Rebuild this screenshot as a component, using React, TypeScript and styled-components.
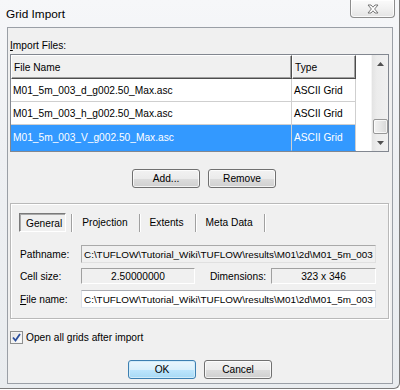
import React from "react";
import styled, { createGlobalStyle, css } from "styled-components";

const GlobalStyle = createGlobalStyle`
  html, body { margin: 0; padding: 0; }
  body {
    width: 400px; height: 390px; overflow: hidden; background: #ffffff;
    font-family: "Liberation Sans", Arial, sans-serif; font-size: 10.2px; color: #000;
  }
  * { box-sizing: border-box; }
`;

const Window = styled.div`
  width: 400px;
  height: 389px;
  display: flex;
  flex-direction: column;
  background: linear-gradient(180deg, #f6f7f9 0%, #eef0f3 40%, #e9ecef 100%);
  border-right: 1px solid #7b7b7b;
  border-bottom: 1px solid #7b7b7b;
  border-bottom-right-radius: 6px;
`;

const TitleBar = styled.div`
  height: 27px;
  display: flex;
  align-items: flex-start;
  padding-left: 6px;
`;

const Title = styled.div`
  margin-top: 7px;
  font-size: 11.8px;
  line-height: 14px;
  color: #000;
`;

const CloseButton = styled.div`
  margin-left: auto;
  margin-right: 4px;
  width: 45px;
  height: 18px;
  border: 1px solid #8d8d8d;
  border-top: none;
  border-radius: 0 0 4px 4px;
  background: linear-gradient(180deg, #fbfbfb 0%, #f1f1f1 50%, #e4e4e4 100%);
  box-shadow: inset 0 0 0 1px rgba(255, 255, 255, 0.8);
  display: flex;
  align-items: center;
  justify-content: center;
`;

const Client = styled.div`
  margin-left: 7px;
  width: 386px;
  height: 357px;
  border: 1px solid #9a9fa6;
  background: #f0f0f0;
  padding: 10px 3px 0 2px;
  display: flex;
  flex-direction: column;
`;

const U = styled.span`
  text-decoration: underline;
`;

const SectionLabel = styled.div`
  height: 15px;
  line-height: 15px;
`;

const ListBox = styled.div`
  margin-top: 1px;
  height: 98px;
  border: 1px solid #828790;
  background: #ffffff;
  display: flex;
`;

const ListBody = styled.div`
  flex: 1;
  display: flex;
  flex-direction: column;
  overflow: hidden;
`;

const HeaderRow = styled.div`
  display: flex;
  height: 24px;
  flex-shrink: 0;
`;

const HeaderCell = styled.div<{ $w: number }>`
  width: ${(p) => p.$w}px;
  height: 24px;
  background: #f0f0f0;
  border-top: 1px solid #ffffff;
  border-left: 1px solid #ffffff;
  border-right: 1px solid #4d4d4d;
  border-bottom: 1px solid #4d4d4d;
  box-shadow: inset -1px -1px 0 #a0a0a0;
  padding-left: 2px;
  display: flex;
  align-items: center;
`;

const Row = styled.div<{ $selected?: boolean }>`
  display: flex;
  height: 23px;
  flex-shrink: 0;
  ${(p) =>
    p.$selected &&
    css`
      color: #ffffff;
    `}
`;

const Cell = styled.div<{ $w: number; $selected?: boolean }>`
  width: ${(p) => p.$w}px;
  height: 100%;
  border-right: 1px solid #cfcfcf;
  border-bottom: 1px solid #cfcfcf;
  padding-left: 2px;
  display: flex;
  align-items: center;
  white-space: nowrap;
  overflow: hidden;
  background: ${(p) => (p.$selected ? "#3399ff" : "#ffffff")};
  ${(p) =>
    p.$selected &&
    css`
      border-bottom-color: #3399ff;
      height: 26px;
    `}
`;

const ScrollBar = styled.div`
  width: 17px;
  display: flex;
  flex-direction: column;
  background: linear-gradient(90deg, #e3e3e3 0%, #ececec 30%, #f0f0f0 100%);
  border-left: 1px solid #f5f5f5;
`;

const ScrollArrow = styled.div`
  height: 17px;
  display: flex;
  align-items: center;
  justify-content: center;
`;

const ScrollTrack = styled.div`
  flex: 1;
  display: flex;
  flex-direction: column;
  justify-content: flex-end;
  align-items: center;
`;

const Thumb = styled.div`
  width: 15px;
  height: 15px;
  border: 1px solid #979797;
  border-radius: 2px;
  background: linear-gradient(90deg, #f2f2f2 0%, #e6e6e6 50%, #d8d8d8 100%);
  box-shadow: inset 0 0 0 1px rgba(255, 255, 255, 0.7);
`;

const ButtonRow = styled.div<{ $top: number; $left: number }>`
  display: flex;
  gap: 8px;
  margin-top: ${(p) => p.$top}px;
  padding-left: ${(p) => p.$left}px;
`;

const Button = styled.div<{ $default?: boolean }>`
  width: 68px;
  height: 19px;
  border: 1px solid #707070;
  border-radius: 3px;
  display: flex;
  align-items: center;
  justify-content: center;
  background: linear-gradient(180deg, #f2f2f2 0%, #ebebeb 50%, #dddddd 51%, #cfcfcf 100%);
  box-shadow: inset 0 0 0 1px rgba(255, 255, 255, 0.75);
  ${(p) =>
    p.$default &&
    css`
      border-color: #3c7fb1;
      background: linear-gradient(180deg, #eaf6fd 0%, #d9f0fc 50%, #bee6fd 51%, #a7d9f5 100%);
      box-shadow: inset 0 0 0 1px #d2ecfa;
    `}
`;

const GroupBox = styled.div`
  margin-top: 15px;
  width: 379px;
  height: 116px;
  border: 1px solid #b9b9b9;
  box-shadow: inset 1px 1px 0 #ffffff, 1px 1px 0 #ffffff;
  padding: 9px 12px 0 8px;
  display: flex;
  flex-direction: column;
`;

const TabStrip = styled.div`
  display: flex;
  align-items: center;
  height: 19px;
`;

const Tab = styled.div<{ $active?: boolean }>`
  height: 19px;
  padding: 0 6px;
  display: flex;
  align-items: center;
  white-space: nowrap;
  ${(p) =>
    p.$active &&
    css`
      border-top: 1px solid #7a7a7a;
      border-left: 1px solid #7a7a7a;
      border-right: 1px solid #ffffff;
      border-bottom: 1px solid #ffffff;
      box-shadow: inset 1px 1px 0 #a9a9a9;
      padding: 2px 3px 0 6px;
    `}
`;

const TabSep = styled.div`
  width: 2px;
  height: 18px;
  margin: 0 3px 0 5px;
  border-left: 1px solid #a0a0a0;
  border-right: 1px solid #ffffff;
`;

const FieldRow = styled.div<{ $top: number; $h: number }>`
  display: flex;
  align-items: center;
  margin-top: ${(p) => p.$top}px;
  height: ${(p) => p.$h}px;
  padding-left: 1px;
`;

const FieldLabel = styled.div<{ $w: number }>`
  width: ${(p) => p.$w}px;
  flex-shrink: 0;
  white-space: nowrap;
`;

const TextField = styled.div<{ $readonly?: boolean; $w?: number }>`
  ${(p) => (p.$w ? `width: ${p.$w}px;` : "flex: 1;")}
  height: 100%;
  padding-left: 2px;
  font-size: 9.9px;
  display: flex;
  align-items: center;
  white-space: nowrap;
  overflow: hidden;
  background: ${(p) => (p.$readonly ? "#f0f0f0" : "#ffffff")};
  border: 1px solid #abadb3;
  border-left-color: #dbdfe6;
  border-right-color: #dbdfe6;
  border-bottom-color: #e3e9ef;
  ${(p) =>
    p.$readonly &&
    css`
      border-color: #a9a9a9 #e0e0e0 #e0e0e0 #a9a9a9;
    `}
`;

const StaticField = styled.div<{ $w: number }>`
  width: ${(p) => p.$w}px;
  height: 100%;
  display: flex;
  align-items: center;
  justify-content: center;
  border-top: 1px solid #a0a0a0;
  border-left: 1px solid #a0a0a0;
  border-right: 1px solid #ffffff;
  border-bottom: 1px solid #ffffff;
`;

const Spacer = styled.div<{ $w: number }>`
  width: ${(p) => p.$w}px;
  flex-shrink: 0;
`;

const CheckRow = styled.div`
  margin-top: 12px;
  display: flex;
  align-items: center;
  gap: 3px;
  height: 13px;
`;

const CheckBox = styled.div`
  width: 13px;
  height: 13px;
  border: 1px solid #8e8f8f;
  background: linear-gradient(135deg, #dcdcdc 0%, #f4f4f4 60%, #ffffff 100%);
  box-shadow: inset 0 0 0 1px #f4f4f4;
  display: flex;
  align-items: center;
  justify-content: center;
`;

const CloseIcon = () => (
  <svg width="12" height="10" viewBox="0 0 12 10">
    <path
      d="M1 1 H4 L6 3.2 L8 1 H11 L7.6 5 L11 9 H8 L6 6.8 L4 9 H1 L4.4 5 Z"
      fill="#ffffff"
      stroke="#6a6a6a"
      strokeWidth="0.9"
      strokeLinejoin="round"
    />
  </svg>
);

const UpArrow = () => (
  <svg width="7" height="4" viewBox="0 0 7 4">
    <path d="M0 4 L3.5 0 L7 4 Z" fill="#505050" />
  </svg>
);

const DownArrow = () => (
  <svg width="7" height="4" viewBox="0 0 7 4">
    <path d="M0 0 L3.5 4 L7 0 Z" fill="#505050" />
  </svg>
);

const CheckMark = () => (
  <svg width="9" height="9" viewBox="0 0 9 9">
    <path d="M1 4.5 L3.5 7.5 L8 1" fill="none" stroke="#2a4e9c" strokeWidth="1.8" />
  </svg>
);

const files = [
  "M01_5m_003_d_g002.50_Max.asc",
  "M01_5m_003_h_g002.50_Max.asc",
  "M01_5m_003_V_g002.50_Max.asc",
];

const path = "C:\\TUFLOW\\Tutorial_Wiki\\TUFLOW\\results\\M01\\2d\\M01_5m_003";

export default function App() {
  return (
    <>
      <GlobalStyle />
      <Window>
        <TitleBar>
          <Title>Grid Import</Title>
          <CloseButton>
            <CloseIcon />
          </CloseButton>
        </TitleBar>
        <Client>
          <SectionLabel>
            <U>I</U>mport Files:
          </SectionLabel>
          <ListBox>
            <ListBody>
              <HeaderRow>
                <HeaderCell $w={281}>File Name</HeaderCell>
                <HeaderCell $w={64}>Type</HeaderCell>
              </HeaderRow>
              {files.map((f, i) => {
                const sel = i === files.length - 1;
                return (
                  <Row key={f} $selected={sel}>
                    <Cell $w={281} $selected={sel}>
                      {f}
                    </Cell>
                    <Cell $w={64} $selected={sel}>
                      ASCII Grid
                    </Cell>
                  </Row>
                );
              })}
            </ListBody>
            <ScrollBar>
              <ScrollArrow>
                <UpArrow />
              </ScrollArrow>
              <ScrollTrack>
                <Thumb />
              </ScrollTrack>
              <ScrollArrow>
                <DownArrow />
              </ScrollArrow>
            </ScrollBar>
          </ListBox>
          <ButtonRow $top={17} $left={122}>
            <Button>Add...</Button>
            <Button>Remove</Button>
          </ButtonRow>
          <GroupBox>
            <TabStrip>
              <Tab $active>General</Tab>
              <TabSep />
              <Tab>Projection</Tab>
              <TabSep />
              <Tab>Extents</Tab>
              <TabSep />
              <Tab>Meta Data</Tab>
              <TabSep />
            </TabStrip>
            <FieldRow $top={13} $h={18}>
              <FieldLabel $w={61}>Pathname:</FieldLabel>
              <TextField $readonly>{path}</TextField>
            </FieldRow>
            <FieldRow $top={5} $h={16}>
              <FieldLabel $w={61}>Cell size:</FieldLabel>
              <StaticField $w={114}>2.50000000</StaticField>
              <Spacer $w={15} />
              <FieldLabel $w={61}>Dimensions:</FieldLabel>
              <StaticField $w={105}>323 x 346</StaticField>
            </FieldRow>
            <FieldRow $top={6} $h={18}>
              <FieldLabel $w={61}>
                <U>F</U>ile name:
              </FieldLabel>
              <TextField>{path}</TextField>
            </FieldRow>
          </GroupBox>
          <CheckRow>
            <CheckBox>
              <CheckMark />
            </CheckBox>
            Open all grids after import
          </CheckRow>
          <ButtonRow $top={16} $left={118}>
            <Button $default>OK</Button>
            <Button>Cancel</Button>
          </ButtonRow>
        </Client>
      </Window>
    </>
  );
}
